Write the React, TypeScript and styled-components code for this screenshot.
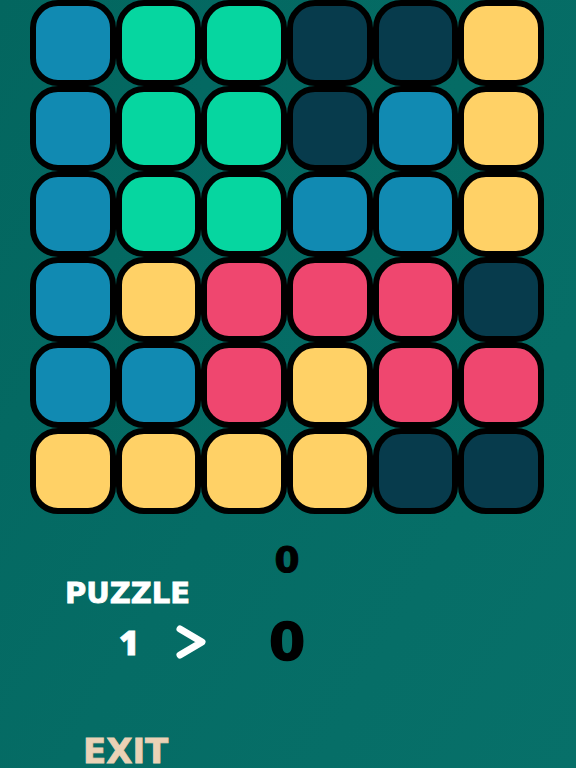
import React from "react";
import styled, { createGlobalStyle } from "styled-components";

const GlobalStyle = createGlobalStyle`
  html, body { margin: 0; padding: 0; }
  body {
    width: 576px;
    height: 768px;
    overflow: hidden;
    background: linear-gradient(120deg, #03665f 0%, #056c65 50%, #077069 100%);
    font-family: "DejaVu Sans", "Liberation Sans", sans-serif;
  }
`;

const COLORS: Record<string, string> = {
  b: "#118ab2",
  g: "#06d6a0",
  n: "#073b4c",
  y: "#ffd166",
  p: "#ef476f",
};

const BOARD = ["bggnny", "bggnby", "bggbby", "bypppn", "bbpypp", "yyyynn"];

const Screen = styled.div`
  width: 576px;
  height: 768px;
  overflow: hidden;
`;

const Board = styled.div`
  margin-left: 30px;
  width: 514px;
  display: grid;
  grid-template-columns: repeat(6, 1fr);
  grid-auto-rows: 85.6px;
`;

const Tile = styled.div<{ $color: string }>`
  box-sizing: border-box;
  border: 6px solid #000;
  border-radius: 28px;
  background: ${(p) => p.$color};
`;

const Info = styled.div`
  margin-top: 28px;
  padding-left: 65px;
  display: grid;
  grid-template-columns: 192px 60px;
  grid-template-areas:
    ". best"
    "label ."
    "level score";
  color: #fff;
  font-weight: 700;
`;

const Best = styled.div`
  grid-area: best;
  font-size: 36px;
  line-height: 36px;
  color: #000;
  text-align: center;
  -webkit-text-stroke: 1px #000;
`;

const Label = styled.div`
  grid-area: label;
  font-size: 29px;
  line-height: 29px;
  margin-top: 1px;
  color: #fff;
  -webkit-text-stroke: 0.8px #fff;
`;

const LevelRow = styled.div`
  grid-area: level;
  display: flex;
  align-items: center;
  padding-left: 54px;
  gap: 36px;
  margin-top: 8px;
`;

const LevelNumber = styled.span`
  font-family: "Open Sans", "DejaVu Sans", sans-serif;
  font-weight: 800;
  font-size: 34px;
  line-height: 34px;
  color: #fff;
  -webkit-text-stroke: 0.8px #fff;
`;

const Score = styled.div`
  grid-area: score;
  font-size: 52px;
  line-height: 52px;
  margin-top: 8px;
  color: #000;
  text-align: center;
  -webkit-text-stroke: 1.5px #000;
`;

const Exit = styled.div`
  margin-top: 66px;
  padding-left: 83px;
  font-size: 34px;
  line-height: 34px;
  font-weight: 700;
  color: #ead2b6;
  -webkit-text-stroke: 0.8px #ead2b6;
`;

const Chevron = () => (
  <svg width="32" height="36" viewBox="0 0 32 36">
    <polyline
      points="5,5 27,18 5,31"
      fill="none"
      stroke="#fff"
      strokeWidth="7"
      strokeLinecap="round"
      strokeLinejoin="round"
    />
  </svg>
);

export default function App() {
  return (
    <Screen>
      <GlobalStyle />
      <Board>
        {BOARD.map((row, r) =>
          row.split("").map((c, i) => <Tile key={`${r}-${i}`} $color={COLORS[c]} />)
        )}
      </Board>
      <Info>
        <Best>0</Best>
        <Label>PUZZLE</Label>
        <LevelRow>
          <LevelNumber>1</LevelNumber>
          <Chevron />
        </LevelRow>
        <Score>0</Score>
      </Info>
      <Exit>EXIT</Exit>
    </Screen>
  );
}
